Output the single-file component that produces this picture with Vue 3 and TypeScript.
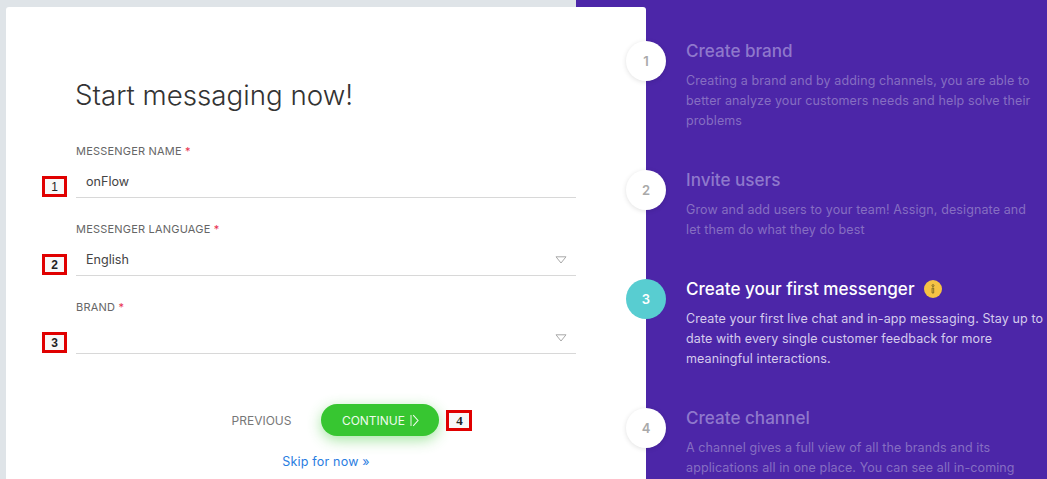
<template>
  <div class="page">
    <section class="form-side">
      <div class="card">
        <h1>Start messaging now!</h1>

        <div v-for="field in fields" :key="field.label" class="field">
          <label>{{ field.label }} <span class="req">*</span></label>
          <div class="control">
            <span>{{ field.value }}</span>
            <svg v-if="field.select" class="caret" width="12" height="8" viewBox="0 0 12 8">
              <path d="M1 .8h10L6 7z" fill="none" stroke="#a8a8a8" stroke-width="1" />
            </svg>
            <span class="marker" :class="field.markerClass">{{ field.marker }}</span>
          </div>
        </div>

        <div class="actions">
          <span class="prev">PREVIOUS</span>
          <div class="continue-wrap">
            <button class="continue">
              CONTINUE
              <svg width="9" height="13" viewBox="0 0 9 13">
                <path d="M1 1v11" fill="none" stroke="#cdeec8" stroke-width="1.2" />
                <path d="M3.2 1.2 8 6.5l-4.8 5.3" fill="none" stroke="#eefbec" stroke-width="1.1" />
              </svg>
            </button>
            <span class="marker marker-serif">4</span>
          </div>
        </div>
        <a class="skip">Skip for now »</a>
      </div>
    </section>

    <section class="steps">
      <div v-for="step in steps" :key="step.num" class="step" :class="{ current: step.current }">
        <div class="num">{{ step.num }}</div>
        <div class="body">
          <h3>
            {{ step.title }}
            <svg v-if="step.current" class="info" width="18" height="18" viewBox="0 0 18 18">
              <circle cx="9" cy="9" r="9" fill="#f6c244" />
              <circle cx="9" cy="5.6" r="1" fill="none" stroke="#6b5a20" stroke-width="0.8" />
              <path d="M8.1 8h1.6v5H8.1z" fill="none" stroke="#6b5a20" stroke-width="0.8" />
            </svg>
          </h3>
          <p>{{ step.text }}</p>
        </div>
      </div>
    </section>
  </div>
</template>

<script setup lang="ts">
const fields = [
  { label: 'MESSENGER NAME', value: 'onFlow', select: false, marker: '1', markerClass: 'marker-thin' },
  { label: 'MESSENGER LANGUAGE', value: 'English', select: true, marker: '2', markerClass: '' },
  { label: 'BRAND', value: '', select: true, marker: '3', markerClass: '' },
]

const steps = [
  {
    num: 1,
    title: 'Create brand',
    text: 'Creating a brand and by adding channels, you are able to better analyze your customers needs and help solve their problems',
  },
  {
    num: 2,
    title: 'Invite users',
    text: 'Grow and add users to your team! Assign, designate and let\u00a0them do what they do best',
  },
  {
    num: 3,
    title: 'Create your first messenger',
    text: 'Create your first live chat and in-app messaging. Stay up to date with every single customer feedback for more meaningful interactions.',
    current: true,
  },
  {
    num: 4,
    title: 'Create channel',
    text: 'A channel gives a full view of all the brands and its applications all in one place. You can see all in-coming',
  },
]
</script>

<style>
html,
body {
  margin: 0;
  overflow: hidden;
}
</style>

<style scoped>
.page {
  display: flex;
  height: 479px;
  overflow: hidden;
  background: #4c26a8;
  font-family: Inter, "Liberation Sans", sans-serif;
}

.form-side {
  width: 576px;
  flex: none;
  box-sizing: border-box;
  padding: 7px 0 0 6px;
  background: #dfe4e8;
}

.card {
  position: relative;
  z-index: 1;
  width: 640px;
  height: 472px;
  box-sizing: border-box;
  padding: 69px 70px 0;
  background: #fff;
  border-radius: 3px 3px 0 0;
}

h1 {
  margin: 0 0 30px -1px;
  font-size: 27.7px;
  line-height: 38px;
  font-weight: 300;
  color: #333;
}

.field {
  height: 78px;
}

.field label {
  display: block;
  font-size: 11px;
  line-height: 14px;
  letter-spacing: 0.2px;
  color: #666;
}

.req {
  color: #e8304f;
}

.control {
  position: relative;
  display: flex;
  align-items: flex-end;
  height: 38px;
  box-sizing: border-box;
  margin-top: 2px;
  padding: 0 0 7px 10px;
  border-bottom: 1px solid #d8d8d8;
  font-size: 12.6px;
  line-height: 16px;
  color: #444;
}

.caret {
  position: absolute;
  right: 9px;
  top: 18px;
}

.marker {
  position: absolute;
  left: -34px;
  bottom: 0;
  width: 25px;
  height: 21px;
  box-sizing: border-box;
  border: 3px solid #e00000;
  background: #f8f8f8;
  font-family: "Liberation Sans", sans-serif;
  font-size: 12px;
  font-weight: 700;
  line-height: 16px;
  text-align: center;
  color: #222;
}

.marker-thin {
  font-weight: 400;
}

.marker-serif {
  left: auto;
  right: -33px;
  bottom: auto;
  top: 6px;
  width: 26px;
  font-family: "Liberation Serif", serif;
  font-size: 13px;
}

.actions {
  display: flex;
  align-items: center;
  justify-content: center;
  gap: 30px;
  margin-top: 26px;
  padding-left: 19px;
}

.prev {
  font-size: 12px;
  color: #777;
}

.continue-wrap {
  position: relative;
}

.continue {
  display: flex;
  align-items: center;
  justify-content: center;
  gap: 5px;
  height: 32px;
  width: 118px;
  padding: 0;
  border: 0;
  border-radius: 16px;
  background: #37c631;
  box-shadow: 0 4px 14px rgba(55, 198, 49, 0.45);
  font-family: inherit;
  font-size: 12px;
  color: #eefbec;
}

.skip {
  display: block;
  margin-top: 18px;
  text-align: center;
  font-size: 12.5px;
  letter-spacing: 0.2px;
  line-height: 16px;
  color: #2a7de1;
}

.steps {
  position: relative;
  z-index: 2;
  flex: 1;
  min-width: 0;
  padding: 41px 0 0 50px;
}

.step {
  display: flex;
  gap: 20px;
  margin-bottom: 39px;
}

.step:last-child {
  margin-bottom: 0;
}

.num {
  flex: none;
  display: flex;
  align-items: center;
  justify-content: center;
  width: 40px;
  height: 40px;
  border-radius: 50%;
  background: #fff;
  box-shadow: 0 1px 5px rgba(0, 0, 0, 0.12);
  font-size: 13px;
  font-weight: 600;
  color: #a9a9a9;
}

.current .num {
  background: #58cdd1;
  color: #fff;
  box-shadow: none;
}

.body {
  min-width: 0;
  width: 361px;
}

h3 {
  display: flex;
  align-items: center;
  gap: 9px;
  margin: 0 0 10px;
  font-size: 17.1px;
  line-height: 20px;
  font-weight: 500;
  color: #8f78cc;
}

p {
  margin: 0;
  font-size: 12.5px;
  letter-spacing: 0.11px;
  line-height: 20px;
  color: #866ec2;
}

.current h3 {
  color: #fff;
}

.current p {
  color: #d5cbed;
}
</style>
